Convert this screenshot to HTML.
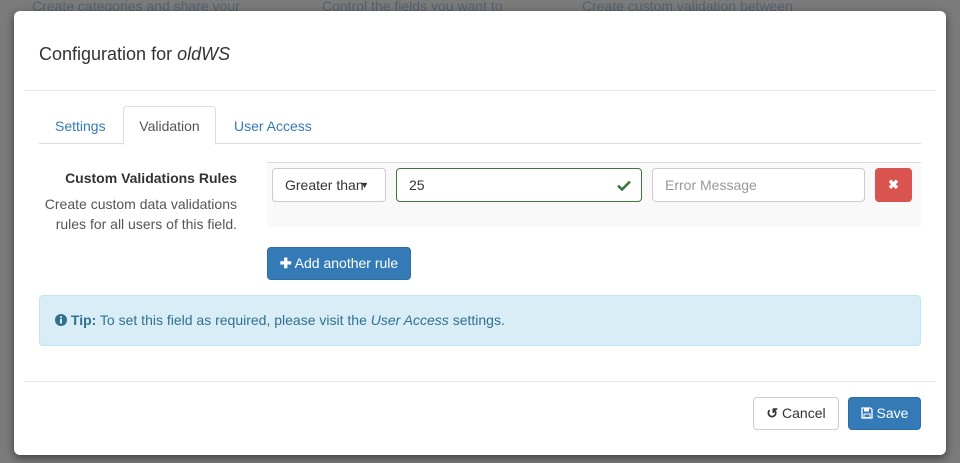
<!DOCTYPE html>
<html style="overflow:hidden;height:463px"><head><style>
*{box-sizing:border-box}
body{margin:0;width:960px;height:463px;background:#7b7b7b;font-family:"Liberation Sans",sans-serif;font-size:14px;color:#333;position:relative;overflow:hidden}
.bgt{position:absolute;top:-2px;color:#2a4a66;opacity:.5;font-size:14px}
.m{position:absolute;left:14px;top:11px;width:932px;height:444px;background:#fff;border-radius:6px;box-shadow:0 3px 9px rgba(0,0,0,.5)}
.a{position:absolute}
.tab{position:absolute;top:106px;height:38px;line-height:40px;color:#337ab7}
.inp{position:absolute;height:34px;border:1px solid #ccc;border-radius:4px;background:#fff;line-height:32px;padding-left:12px}
.btn{position:absolute;border-radius:4px;line-height:30px;text-align:center}
</style></head><body>
<div class="bgt" style="left:32px">Create categories and share your</div>
<div class="bgt" style="left:322px">Control the fields you want to</div>
<div class="bgt" style="left:582px">Create custom validation between</div>
<div class="m"></div>
<div class="a" style="left:39px;top:44px;font-size:18px">Configuration for <i>oldWS</i></div>
<div class="a" style="left:24px;top:90px;width:912px;border-top:1px solid #e5e5e5"></div>
<div class="a" style="left:39px;top:143px;width:882px;border-top:1px solid #ddd"></div>
<div class="tab" style="left:55px">Settings</div>
<div class="tab" style="left:123px;width:93px;border:1px solid #ddd;border-bottom-color:#fff;border-radius:4px 4px 0 0;background:#fff;color:#555;text-align:center;height:39px;line-height:38px">Validation</div>
<div class="tab" style="left:234px">User Access</div>
<div class="a" style="left:40px;top:170px;width:197px;text-align:right;font-weight:bold">Custom Validations Rules</div>
<div class="a" style="left:40px;top:194px;width:197px;text-align:right;color:#555;line-height:20px">Create custom data validations rules for all users of this field.</div>
<div class="a" style="left:267px;top:162px;width:654px;height:65px;background:#f9f9f9;border-top:1px solid #ddd"></div>
<div class="inp" style="left:272px;top:168px;width:114px;color:#333">Greater than<span style="position:absolute;right:16px;top:0;font-size:9px">▼</span></div>
<div class="inp" style="left:396px;top:168px;width:246px;border-color:#3c763d">25<svg style="position:absolute;right:10px;top:11px" width="14" height="11" viewBox="0 0 14 11"><path d="M1 5.5l4 4 8-8" stroke="#3c763d" stroke-width="2.6" fill="none"/></svg></div>
<div class="inp" style="left:652px;top:168px;width:213px;color:#999">Error Message</div>
<div class="btn" style="left:875px;top:168px;width:37px;height:34px;background:#d9534f;color:#fff;font-weight:bold;line-height:33px;font-size:13px">✖</div>
<div class="btn" style="left:267px;top:247px;width:144px;height:33px;background:#337ab7;color:#fff;border:1px solid #2e6da4"><b>✚</b> Add another rule</div>
<div class="a" style="left:39px;top:295px;width:882px;height:51px;background:#d9edf7;border:1px solid #bce8f1;border-radius:4px;color:#31708f;padding:16px 0 0 15px"><svg width="12" height="12" viewBox="0 0 12 12" style="vertical-align:-1px"><circle cx="6" cy="6" r="6" fill="#31708f"/><rect x="5" y="5" width="2" height="4.5" fill="#d9edf7"/><circle cx="6" cy="3.2" r="1.1" fill="#d9edf7"/></svg> <b>Tip:</b> To set this field as required, please visit the <i>User Access</i> settings.</div>
<div class="a" style="left:24px;top:381px;width:912px;border-top:1px solid #e5e5e5"></div>
<div class="btn" style="left:753px;top:397px;width:86px;height:33px;border:1px solid #ccc;background:#fff"><b>↺</b> Cancel</div>
<div class="btn" style="left:848px;top:397px;width:73px;height:33px;background:#337ab7;border:1px solid #2e6da4;color:#fff"><svg width="12" height="12" viewBox="0 0 12 12" style="vertical-align:-1px"><path d="M1 1h8.5L11 2.5V11H1z" fill="none" stroke="#fff" stroke-width="1.3"/><rect x="3" y="1" width="5" height="3.5" fill="#fff"/><rect x="3" y="7" width="6" height="3.5" fill="none" stroke="#fff"/></svg> Save</div>
</body></html>
